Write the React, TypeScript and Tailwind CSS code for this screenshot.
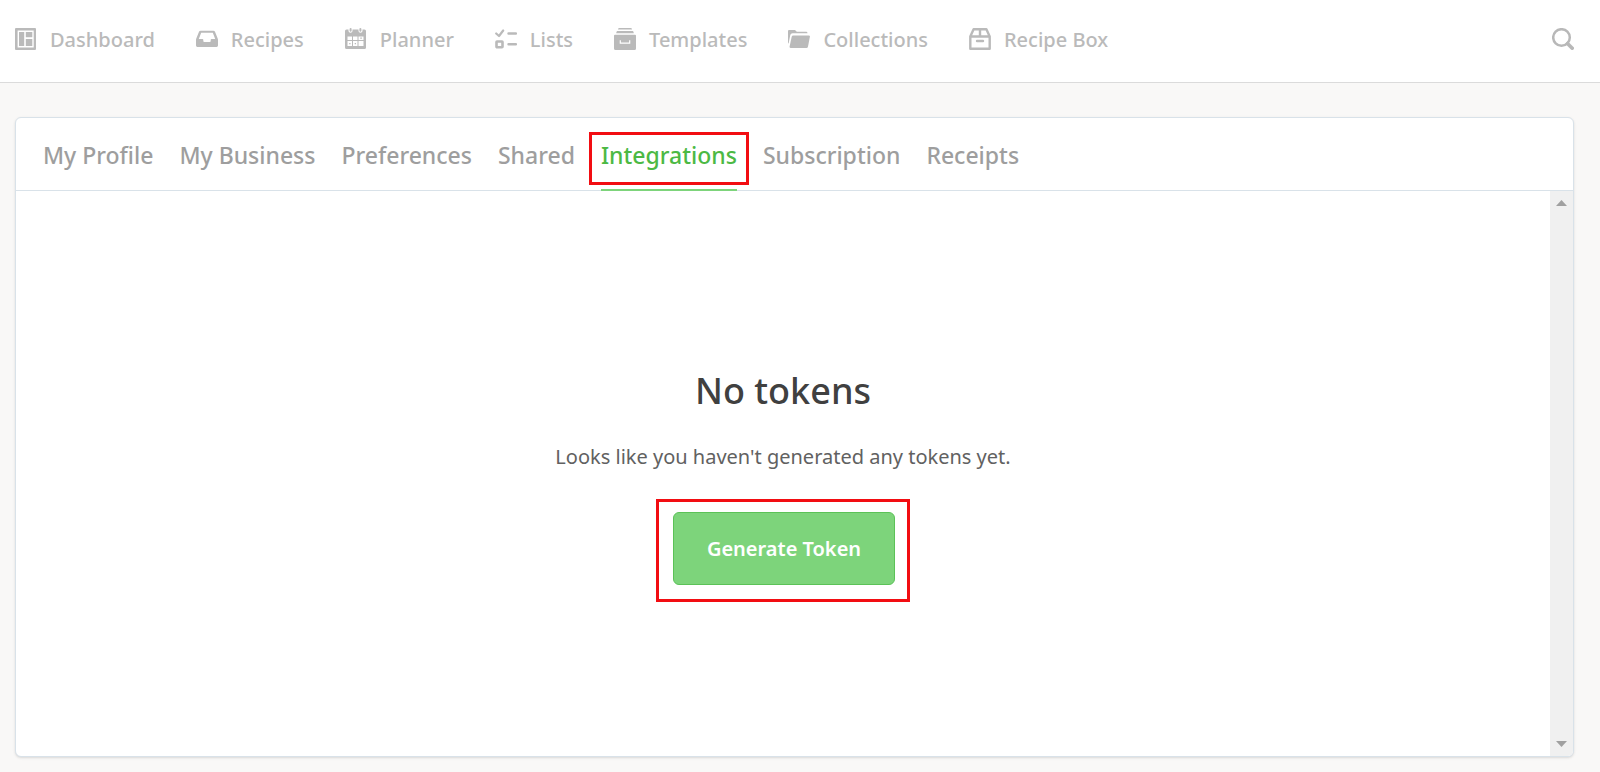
import type { ReactNode } from "react";

function Icon({ children }: { children: ReactNode }) {
  return (
    <svg viewBox="0 0 22 22" className="size-[22px] shrink-0" fill="currentColor" aria-hidden="true">
      {children}
    </svg>
  );
}

const icons = {
  dashboard: (
    <Icon>
      <path
        fillRule="evenodd"
        d="M1 0H20Q21 0 21 1V21Q21 22 20 22H1Q0 22 0 21V1Q0 0 1 0ZM2.600 2.600V19.400H18.700V2.600Z"
      />
      <path d="M4 4H9.200V18H4ZM10.800 4H17.300V9.200H10.800ZM10.800 11H17.300V18H10.800Z" />
    </Icon>
  ),
  recipes: (
    <Icon>
      <path
        fillRule="evenodd"
        d="M4.600 2.700H17.400Q18.500 2.700 19 3.700L21.700 10.500Q22 11.200 22 12V17.600Q22 19 20.600 19H1.400Q0 19 0 17.600V12Q0 11.200 .3 10.500L3 3.700Q3.500 2.700 4.600 2.700ZM5.200 4.700L2.800 11H6.500Q7.300 11 7.300 12V13Q7.300 14 8.300 14H13.700Q14.700 14 14.700 13V12Q14.700 11 15.500 11H19.200L16.800 4.700Z"
      />
    </Icon>
  ),
  planner: (
    <Icon>
      <path
        fillRule="evenodd"
        d="M1.500 1.500H3.500V3Q3.500 4.800 5.500 4.800T7.500 3V1.500H13.500V3Q13.500 4.800 15.500 4.800T17.500 3V1.500H19.500Q21 1.500 21 3V19.500Q21 21 19.500 21H1.500Q0 21 0 19.500V3Q0 1.500 1.500 1.500ZM2.500 8.500V12H7V8.500ZM8 8.500V12H12.500V8.500ZM13.500 8.500V12H18.500V8.500ZM2.500 13V18H7V13ZM8 13V18H12.500V13ZM13.500 13V18H18.500V13Z"
      />
      <rect x="4.600" y="0" width="2" height="3.800" rx="1" />
      <rect x="14.400" y="0" width="2" height="3.800" rx="1" />
      <path d="M15.300 9.600H16.800V10.800H15.300ZM4.200 15H5.500V16.200H4.200ZM9.700 15H11V16.200H9.700Z" />
    </Icon>
  ),
  lists: (
    <Icon>
      <path d="M1.200 5.500L4 8L8.200 2.500" fill="none" stroke="currentColor" strokeWidth="2.200" strokeLinecap="round" strokeLinejoin="round" />
      <path d="M13.500 5.500H21M13.500 16.300H21" stroke="currentColor" strokeWidth="2.400" strokeLinecap="round" />
      <rect x="1.500" y="13.500" width="6" height="5.800" rx=".5" fill="none" stroke="currentColor" strokeWidth="2.600" />
    </Icon>
  ),
  templates: (
    <Icon>
      <path d="M5 0H17Q18 .2 18 1.500H4Q4 .2 5 0ZM3.200 3H18.800Q19.700 3.300 19.800 5.200H2.200Q2.300 3.300 3.200 3Z" />
      <path
        fillRule="evenodd"
        d="M1 6.700H21Q22 6.700 22 7.700V20.500Q22 22 20.500 22H1.500Q0 22 0 20.500V7.700Q0 6.700 1 6.700ZM5.700 12.200V15.800H16.300V12.200H15.100V14.500H6.900V12.200Z"
      />
    </Icon>
  ),
  collections: (
    <Icon>
      <path d="M1 2H7L8.800 3.800H18.500Q19.500 3.800 19.500 5.300H4.500Q2.700 5.300 2.300 7L.6 15.500Q0 15.500 0 14.500V3Q0 2 1 2Z" />
      <path d="M5.200 7.500H20.800Q22.100 7.500 21.900 8.700L20 18.500Q19.700 20 18.500 20H2.800Q1.300 20 1.600 18.500L3.700 8.700Q4 7.500 5.200 7.500Z" />
    </Icon>
  ),
  box: (
    <Icon>
      <path
        d="M4.600 1.200H17.400L20.700 8.500V20.800H1.300V8.500ZM1.300 8.500H20.700M11 1.200V8"
        fill="none"
        stroke="currentColor"
        strokeWidth="2.400"
        strokeLinejoin="round"
      />
      <path d="M8 13H14" stroke="currentColor" strokeWidth="2.400" strokeLinecap="round" />
    </Icon>
  ),
};

const navItems = [
  { label: "Dashboard", icon: icons.dashboard },
  { label: "Recipes", icon: icons.recipes },
  { label: "Planner", icon: icons.planner },
  { label: "Lists", icon: icons.lists },
  { label: "Templates", icon: icons.templates },
  { label: "Collections", icon: icons.collections },
  { label: "Recipe Box", icon: icons.box },
];

const tabs = ["My Profile", "My Business", "Preferences", "Shared", "Integrations", "Subscription", "Receipts"];

function Header() {
  return (
    <header className="flex h-[83px] shrink-0 items-center justify-between border-b border-[#dbdbdb] bg-white pr-[26px] pb-1 pl-[15px]">
      <nav aria-label="Main" className="flex items-center gap-[41px]">
        {navItems.map(({ label, icon }) => (
          <a key={label} href="#" className="flex items-center gap-[13px] text-xl leading-7 font-medium whitespace-nowrap text-[#bababa]">
            {icon}
            <span className="pt-0.5">{label}</span>
          </a>
        ))}
      </nav>
      <button type="button" aria-label="Search" className="text-[#b8b8b8]">
        <svg viewBox="0 0 22 22" className="size-[22px]" fill="none" stroke="currentColor" aria-hidden="true">
          <circle cx="9.500" cy="9.500" r="8.300" strokeWidth="2.500" />
          <path d="M15.500 15.500L20.200 20.200" strokeWidth="3.600" strokeLinecap="round" />
        </svg>
      </button>
    </header>
  );
}

function Tabs() {
  return (
    <nav aria-label="Account" className="flex h-[73px] shrink-0 gap-[26px] border-b border-[#d9e2e9] px-[27px]">
      {tabs.map((tab) =>
        tab === "Integrations" ? (
          <a
            key={tab}
            href="#"
            aria-current="page"
            className="relative -mb-px flex items-center border-b-2 border-[#7dd47b] pt-1 text-[23px] font-medium whitespace-nowrap text-[#4cb944]"
          >
            {tab}
            <span className="pointer-events-none absolute -inset-x-3 top-3.5 h-[53px] border-3 border-[#f20d12]" />
          </a>
        ) : (
          <a
            key={tab}
            href="#"
            className="-mb-px flex items-center border-b-2 border-transparent pt-1 text-[23px] font-medium whitespace-nowrap text-[#9e9e9e]"
          >
            {tab}
          </a>
        ),
      )}
    </nav>
  );
}

function ScrollTrack() {
  return (
    <div className="flex w-[23px] shrink-0 flex-col items-center justify-between bg-[#f0f0f0] py-[9px] text-[#a0a0a0]">
      <button type="button" aria-label="Scroll up">
        <svg viewBox="0 0 11 6" className="h-1.5 w-[11px]" fill="currentColor">
          <path d="M5.500 0L11 6H0Z" />
        </svg>
      </button>
      <button type="button" aria-label="Scroll down">
        <svg viewBox="0 0 11 6" className="h-1.5 w-[11px]" fill="currentColor">
          <path d="M0 0H11L5.500 6Z" />
        </svg>
      </button>
    </div>
  );
}

export default function App() {
  return (
    <div className="flex min-h-screen flex-col bg-[#f9f8f7] font-['Noto_Sans','Open_Sans',sans-serif]">
      <Header />
      <main className="flex grow flex-col pt-[34px] pr-[26px] pb-[15px] pl-[15px]">
        <section className="flex grow flex-col overflow-hidden rounded-md border border-[#d9e2e9] bg-white shadow-sm">
          <Tabs />
          <div className="flex grow">
            <div className="flex grow flex-col items-center justify-center pt-5">
              <h1 className="text-4xl leading-[52px] font-medium text-[#404040]">No tokens</h1>
              <p className="mt-6 text-xl leading-8 text-[#616161]">Looks like you haven't generated any tokens yet.</p>
              <div className="mt-[26px] border-3 border-[#f20d12] pt-2.5 pr-3 pb-3.5 pl-3.5">
                <button
                  type="button"
                  className="h-[73px] rounded-md border border-[#5bc257] bg-[#7dd47b] px-[33px] text-xl font-semibold text-white"
                >
                  Generate Token
                </button>
              </div>
            </div>
            <ScrollTrack />
          </div>
        </section>
      </main>
    </div>
  );
}
